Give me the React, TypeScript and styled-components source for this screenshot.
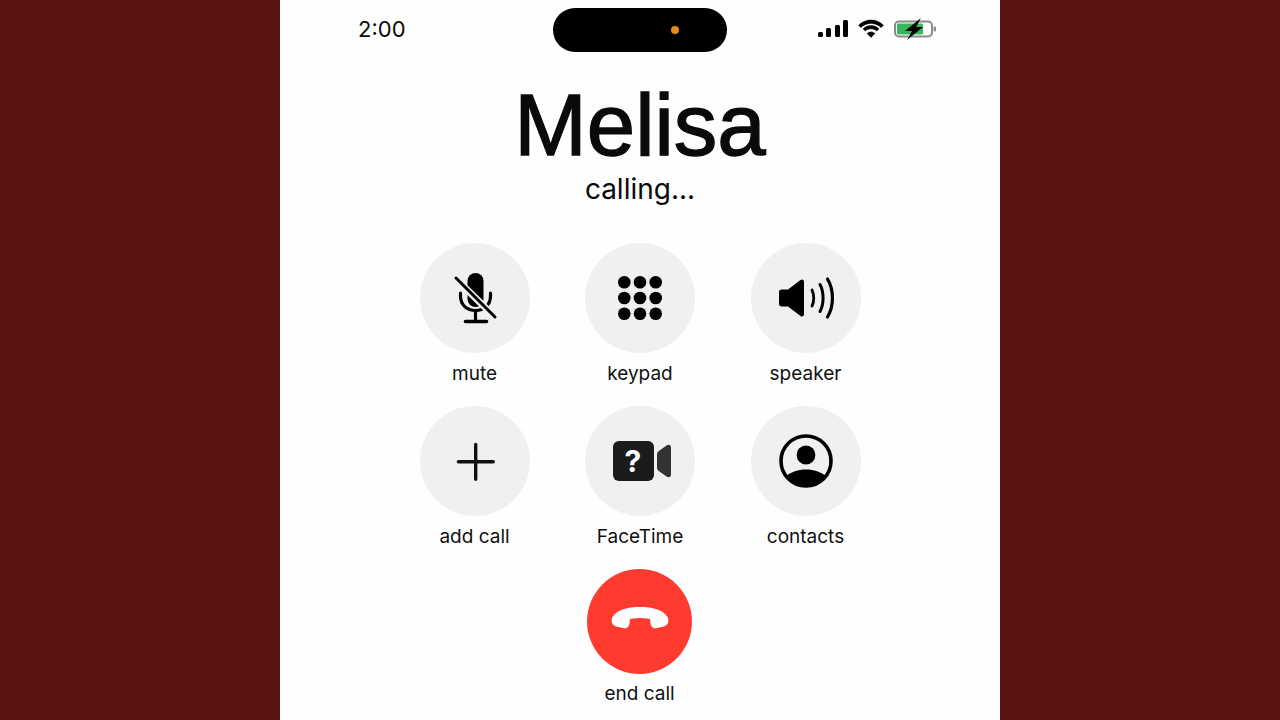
import styled, { createGlobalStyle } from "styled-components";

const GlobalStyle = createGlobalStyle`
    html, body {
        margin: 0;
        padding: 0;
        height: 100%;
        background-color: #5a1311;
        overflow: hidden;
    }
`;

const MicIcon = () => (
    <svg width="60" height="60" viewBox="0 0 60 60">
        <rect x="22.5" y="5" width="16" height="34" rx="8" fill="#000" />
        <path d="M15.5 25 V28 C15.5 37 22 42.5 30.5 42.5 C39 42.5 45.5 37 45.5 28 V25" fill="none" stroke="#000" strokeWidth="3.2" strokeLinecap="round" />
        <path d="M30.5 42.5 V53" stroke="#000" strokeWidth="3.2" />
        <path d="M20.5 53.5 H41.5" stroke="#000" strokeWidth="3.6" strokeLinecap="round" />
        <path d="M7 7 L55 54" stroke="#f0f0f0" strokeWidth="7" />
        <path d="M11 10 L50 49" stroke="#000" strokeWidth="3" strokeLinecap="round" />
    </svg>
);

const KeypadIcon = () => (
    <svg width="48" height="48" viewBox="0 0 48 48">
        {[8.3, 24, 39.7].map((y) =>
            [8.3, 24, 39.7].map((x) => <circle key={`${x}-${y}`} cx={x} cy={y} r="6.3" fill="#000" />)
        )}
    </svg>
);

const SpeakerIcon = () => (
    <svg width="60" height="44" viewBox="0 0 60 44">
        <path d="M5.5 13.5 H12 L24.5 4 C26.5 2.8 28 3.8 28 6 V38 C28 40.2 26.5 41.2 24.5 40 L12 30.5 H5.5 C4 30.5 3 29.5 3 28 V16 C3 14.5 4 13.5 5.5 13.5 Z" fill="#000" />
        <g fill="none" stroke="#000" strokeLinecap="round">
            <path d="M36 14 C38.3 18.5 38.3 25.5 36 30" strokeWidth="2.8" />
            <path d="M44 8.5 C48.1 16 48.1 28 44 35.5" strokeWidth="3" />
            <path d="M51.5 3 C58.1 14 58.1 30 51.5 41" strokeWidth="3.2" />
        </g>
    </svg>
);

const PlusIcon = () => (
    <svg width="42" height="42" viewBox="0 0 42 42">
        <path d="M4.4 21.7 H39.3 M21.7 4.4 V39.3" stroke="#111" strokeWidth="3.4" strokeLinecap="round" />
    </svg>
);

const FaceTimeIcon = () => (
    <svg width="62" height="42" viewBox="0 0 62 42">
        <rect x="4" y="1" width="41" height="40" rx="6" fill="#1b1b1b" />
        <text x="24" y="31.5" textAnchor="middle" fontFamily="Inter, sans-serif" fontWeight="700" fontSize="30" fill="#fff">?</text>
        <path d="M48 14.5 C48 13 48.6 12 49.8 11 L57.5 5.5 C60 3.8 62 5 62 7.5 V34.5 C62 37 60 38.2 57.5 36.5 L49.8 31 C48.6 30 48 29 48 27.5 Z" fill="#333" />
    </svg>
);

const ContactIcon = () => (
    <svg width="54" height="54" viewBox="0 0 54 54">
        <circle cx="27" cy="27" r="25" fill="none" stroke="#000" strokeWidth="3.6" />
        <circle cx="27" cy="21" r="9.4" fill="#000" />
        <path d="M7.5 42 C12 38 19 35.5 27 35.5 C35 35.5 42 38 46.5 42 C42 48.5 34.5 52 27 52 C19.5 52 12 48.5 7.5 42 Z" fill="#000" />
    </svg>
);

const HangUpIcon = () => (
    <svg width="58" height="24" viewBox="0 0 58 24">
        <path d="M1.5 11 C6 3.5 17 1 29 1 C41 1 52 3.5 56.5 11 C58.5 15 57 19.5 53 20.5 L46 22 C42 23 39.8 21 39.5 17 L39 13 C32 11.5 26 11.5 19 13 L18.5 17 C18.2 21 16 23 12 22 L5 20.5 C1 19.5 -0.5 15 1.5 11 Z" fill="#fff" />
    </svg>
);

const WifiIcon = () => (
    <svg width="26" height="19" viewBox="0 0 26 19">
        <g fill="#000" stroke="#000" strokeWidth="0.5">
            <path d="M13 4.4 C17 4.4 20.6 6 23.2 8.6 L25.4 6.2 C22.2 3 17.8 1 13 1 C8.2 1 3.8 3 0.6 6.2 L2.8 8.6 C5.4 6 9 4.4 13 4.4 Z" />
            <path d="M13 9.8 C15.3 9.8 17.3 10.7 18.8 12.1 L21 9.8 C18.9 7.8 16.1 6.6 13 6.6 C9.9 6.6 7.1 7.8 5 9.8 L7.2 12.1 C8.7 10.7 10.7 9.8 13 9.8 Z" />
            <path d="M13 18.5 L16.9 14.4 C15.9 13.5 14.5 12.9 13 12.9 C11.5 12.9 10.1 13.5 9.1 14.4 Z" />
        </g>
    </svg>
);

const BatteryIcon = () => (
    <svg width="43" height="22" viewBox="0 0 43 22">
        <rect x="1" y="3.5" width="37" height="15" rx="4" fill="none" stroke="#8a8a8a" strokeWidth="2" />
        <rect x="3" y="5.5" width="26" height="11" rx="1.5" fill="#35b85a" />
        <rect x="39.6" y="8.5" width="2.4" height="5" rx="1" fill="#8a8a8a" />
        <path d="M27 0 L11 13 H18 L13 22 L29 9 H22 Z" fill="#000" />
    </svg>
);

const controls = [
    { label: "mute", icon: <MicIcon /> },
    { label: "keypad", icon: <KeypadIcon /> },
    { label: "speaker", icon: <SpeakerIcon /> },
    { label: "add call", icon: <PlusIcon /> },
    { label: "FaceTime", icon: <FaceTimeIcon /> },
    { label: "contacts", icon: <ContactIcon /> },
];

const App = () => {
    return (
        <Page>
            <GlobalStyle />
            <Phone>
                <StatusBar>
                    <Time>2:00</Time>
                    <Island>
                        <IslandDot />
                    </Island>
                    <StatusIcons>
                        <Signal>
                            <SignalBar $height={5} />
                            <SignalBar $height={9} />
                            <SignalBar $height={12} />
                            <SignalBar $height={17} />
                        </Signal>
                        <WifiIcon />
                        <BatteryIcon />
                    </StatusIcons>
                </StatusBar>

                <Name>Melisa</Name>
                <CallState>calling...</CallState>

                <ControlGrid>
                    {controls.map((control) => (
                        <Control key={control.label}>
                            <RoundButton>{control.icon}</RoundButton>
                            <Label>{control.label}</Label>
                        </Control>
                    ))}
                </ControlGrid>

                <EndCall>
                    <EndButton>
                        <HangUpIcon />
                    </EndButton>
                    <Label>end call</Label>
                </EndCall>
            </Phone>
        </Page>
    );
};

const Page = styled.div`
    display: flex;
    justify-content: center;
    height: 720px;
    font-family: Inter, "Liberation Sans", sans-serif;
`;

const Phone = styled.div`
    display: flex;
    flex-direction: column;
    align-items: center;
    width: 720px;
    height: 720px;
    background-color: #fefefe;
    color: #0a0a0a;
`;

const StatusBar = styled.div`
    display: grid;
    grid-template-columns: 1fr auto 1fr;
    align-items: center;
    box-sizing: border-box;
    width: 100%;
    padding: 8px 63px 0;
`;

const Time = styled.div`
    padding-left: 15px;
    margin-bottom: 2px;
    font-size: 22px;
    line-height: 42px;
`;

const Island = styled.div`
    display: flex;
    align-items: center;
    justify-content: flex-end;
    box-sizing: border-box;
    width: 174px;
    height: 44px;
    padding-right: 48px;
    border-radius: 22px;
    background-color: #000;
`;

const IslandDot = styled.div`
    width: 8px;
    height: 8px;
    border-radius: 50%;
    background-color: #e78b1c;
`;

const StatusIcons = styled.div`
    display: flex;
    align-items: center;
    justify-content: flex-end;
    gap: 10px;
    margin-bottom: 3px;
`;

const Signal = styled.div`
    display: flex;
    align-items: flex-end;
    gap: 3.5px;
`;

const SignalBar = styled.div<{ $height: number }>`
    width: 5px;
    height: ${(props) => props.$height}px;
    border-radius: 1.5px;
    background-color: #000;
`;

const Name = styled.h1`
    margin: 28px 0 0;
    font-family: "Liberation Sans", Arial, sans-serif;
    font-size: 87px;
    font-weight: 400;
    line-height: 90px;
    -webkit-text-stroke: 1.4px #0a0a0a;
`;

const CallState = styled.div`
    margin-top: 2px;
    font-size: 28px;
    line-height: 34px;
`;

const ControlGrid = styled.div`
    display: grid;
    grid-template-columns: repeat(3, 165.5px);
    row-gap: 20px;
    margin-top: 37px;
`;

const Control = styled.div`
    display: flex;
    flex-direction: column;
    align-items: center;
    gap: 9px;
`;

const RoundButton = styled.div`
    display: flex;
    align-items: center;
    justify-content: center;
    width: 110px;
    height: 110px;
    border-radius: 50%;
    background-color: #f0f0f0;
`;

const Label = styled.div`
    font-size: 19px;
    line-height: 24px;
    color: #111;
`;

const EndCall = styled.div`
    display: flex;
    flex-direction: column;
    align-items: center;
    gap: 8px;
    margin: 20px 1px 0 0;
`;

const EndButton = styled.div`
    display: flex;
    align-items: center;
    justify-content: center;
    width: 105px;
    height: 105px;
    padding-bottom: 7px;
    box-sizing: border-box;
    border-radius: 50%;
    background-color: #ff3b30;
`;

export default App;
